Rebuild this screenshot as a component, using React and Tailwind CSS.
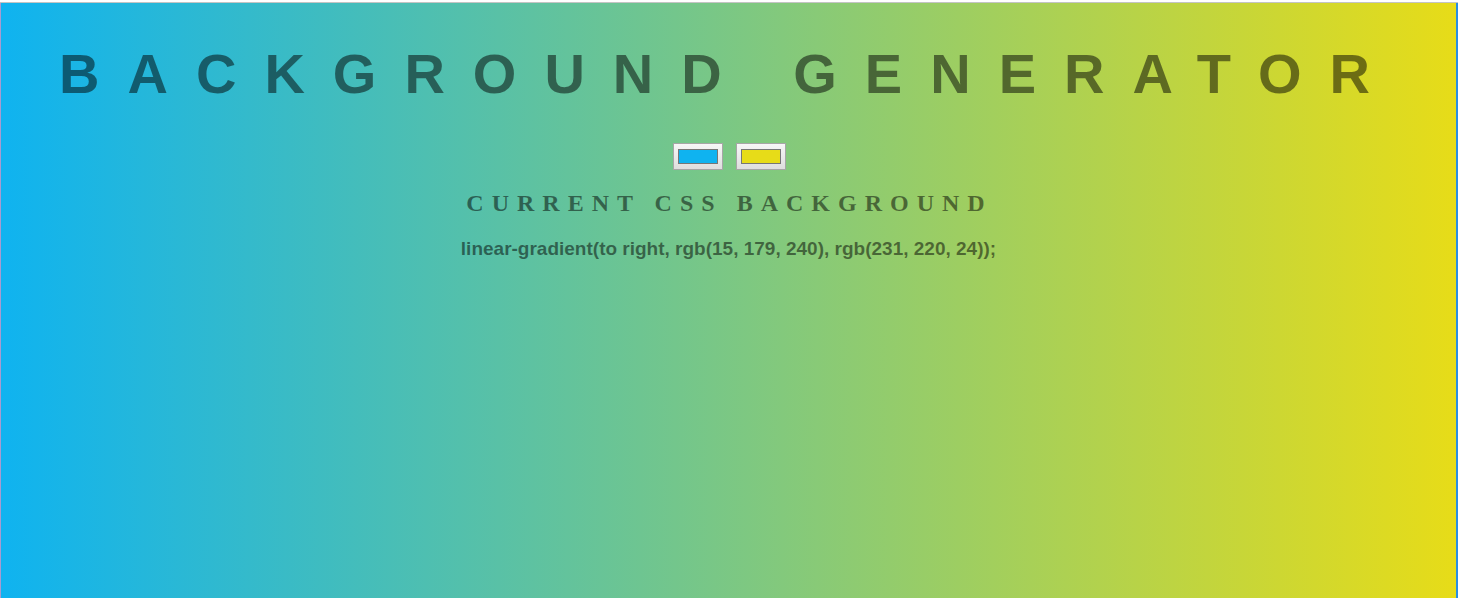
import React, { useState } from 'react';

const ColorBox = ({ value, onChange }) => (
  <label className="relative block w-[50px] h-[27px] border border-[#a6a6a6] bg-gradient-to-b from-[#f7f7f7] to-[#dedede] px-[4px] py-[5px] cursor-pointer">
    <span className="block w-full h-full border border-[#767676]" style={{ background: value }} />
    <input
      type="color"
      value={value}
      onChange={(e) => onChange(e.target.value)}
      className="absolute inset-0 opacity-0 w-full h-full cursor-pointer"
    />
  </label>
);

const App = () => {
  const [color1, setColor1] = useState('#0fb3f0');
  const [color2, setColor2] = useState('#e7dc18');

  const toRgb = (hex) => {
    const n = parseInt(hex.slice(1), 16);
    return `rgb(${(n >> 16) & 255}, ${(n >> 8) & 255}, ${n & 255})`;
  };

  const css = `linear-gradient(to right, ${toRgb(color1)}, ${toRgb(color2)})`;

  return (
    <div className="w-full h-[598px] flex flex-col bg-white overflow-hidden">
      {/* window edge */}
      <div className="h-[3px] bg-white border-b border-[#c4c4c4] shrink-0" />
      <div className="flex-1 flex border-l border-[#a79bd0] border-r-2 border-r-[#2a8ee0]">
        <div
          className="flex-1 flex flex-col items-center text-black/50"
          style={{ background: css }}
        >
          <h1 className="mt-[39px] w-full text-center font-['Liberation_Sans',Arial,sans-serif] font-bold text-[56px] leading-[64px] tracking-[28px]">
            BACKGROUND GENERATOR
          </h1>
          <div className="mt-[37px] flex gap-[13px] pl-[2px]">
            <ColorBox value={color1} onChange={setColor1} />
            <ColorBox value={color2} onChange={setColor2} />
          </div>
          <h3 className="mt-[20px] pl-[2px] font-['Liberation_Serif','Times_New_Roman',serif] font-bold text-[24px] leading-[27px] tracking-[8px]">
            CURRENT CSS BACKGROUND
          </h3>
          <p className="mt-[22px] font-['Liberation_Sans',Arial,sans-serif] font-bold text-[19px] leading-[20px]">
            {css};
          </p>
        </div>
      </div>
    </div>
  );
};

export default App;
